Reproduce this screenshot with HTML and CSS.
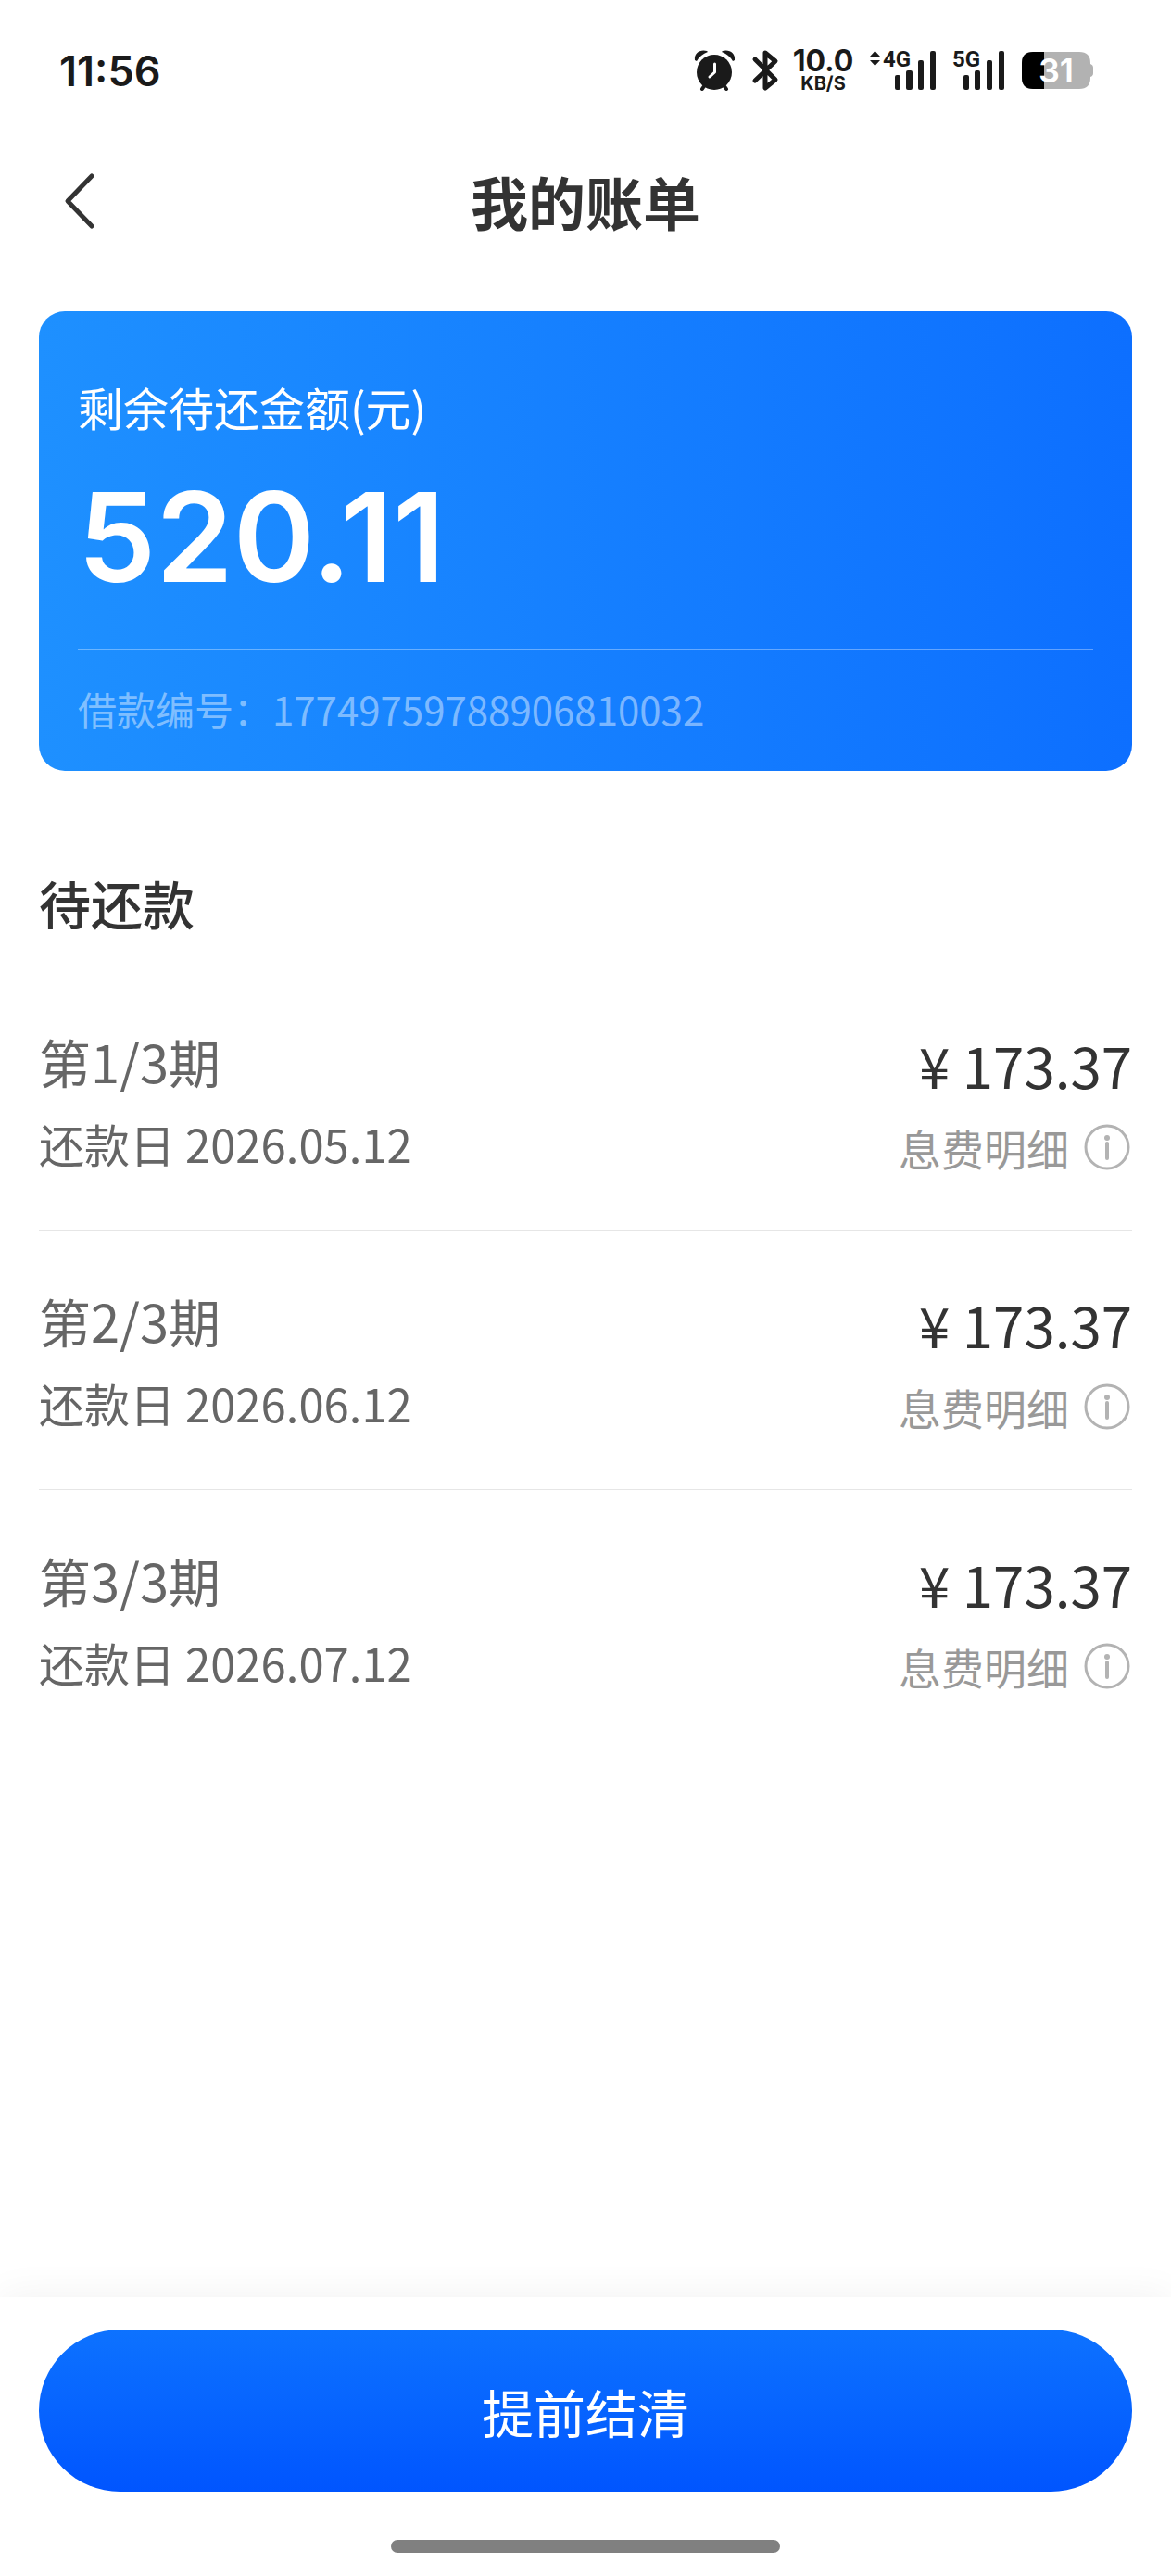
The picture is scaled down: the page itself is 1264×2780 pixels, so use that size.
FILE: index.html
```html
<!DOCTYPE html>
<html lang="zh-CN">
<head>
<meta charset="utf-8">
<meta name="viewport" content="width=device-width, initial-scale=1">
<title>我的账单</title>
<link rel="stylesheet" href="styles.css">
</head>
<body>
<div class="status-bar">
  <time class="clock">11:56</time>
  <div class="indicators">
    <svg class="icon" width="43" height="44" viewBox="0 0 43 44" aria-hidden="true">
      <circle cx="21" cy="24" r="19" fill="#1a1a1a"/>
      <path d="M0 11C-1 3 6-1 13 1L14 2Q6 5 2 12Z" fill="#1a1a1a"/>
      <path d="M43 11C44 3 37-1 30 1L29 2Q37 5 41 12Z" fill="#1a1a1a"/>
      <path d="M10 39L8 42M32 39L34 42" stroke="#1a1a1a" stroke-width="4" stroke-linecap="round"/>
      <path d="M21.500 15V24L16 29" fill="none" stroke="#fff" stroke-width="3" stroke-linecap="round" stroke-linejoin="round"/>
    </svg>
    <svg class="icon" width="26" height="44" viewBox="-1 0 26 44" aria-hidden="true">
      <path d="M2 10L24 32L13 41V3L24 12L2 33" fill="none" stroke="#1a1a1a" stroke-width="5" stroke-linecap="round" stroke-linejoin="round"/>
    </svg>
    <div class="speed"><span class="speed-value">10.0</span><span class="speed-unit">KB/S</span></div>
    <svg class="icon" width="71" height="44" viewBox="0 0 71 44" role="img" aria-label="4G">
      <path d="M5.500 1L11 7H0ZM0 11H11L5.500 17Z" fill="#1a1a1a"/>
      <text class="network" x="14" y="18">4G</text>
      <g fill="#1a1a1a">
        <rect x="27" y="27" width="6" height="16" rx="2"/>
        <rect x="39" y="22" width="7" height="21" rx="2"/>
        <rect x="52" y="11" width="6" height="32" rx="2"/>
        <rect x="65" y="1" width="6" height="42" rx="2"/>
      </g>
    </svg>
    <svg class="icon" width="55" height="44" viewBox="0 0 55 44" role="img" aria-label="5G">
      <text class="network" x="-1" y="18">5G</text>
      <g fill="#1a1a1a">
        <rect x="11" y="27" width="6" height="16" rx="2"/>
        <rect x="23" y="22" width="6" height="21" rx="2"/>
        <rect x="36" y="11" width="6" height="32" rx="2"/>
        <rect x="49" y="1" width="6" height="42" rx="2"/>
      </g>
    </svg>
    <svg class="icon" width="77" height="40" viewBox="0 0 77 40" role="img" aria-label="31%">
      <path d="M12 0H62Q74 0 74 12V13Q77 14 77 17V23Q77 26 74 27V28Q74 40 62 40H12Q0 40 0 28V12Q0 0 12 0Z" fill="#b2b2b2"/>
      <path d="M24 0H12Q0 0 0 12V28Q0 40 12 40H24Z" fill="#000"/>
      <text class="battery-level" x="37" y="33" text-anchor="middle">31</text>
    </svg>
  </div>
</div>

<header class="nav">
  <button class="back" type="button" aria-label="返回">
    <svg class="icon" width="32" height="60" viewBox="0 0 32 60" aria-hidden="true">
      <path d="M29 3L3 30L29 57" fill="none" stroke="#333" stroke-width="5" stroke-linecap="round" stroke-linejoin="round"/>
    </svg>
  </button>
  <h1 class="nav-title">我的账单</h1>
</header>

<main class="content">
  <section class="card">
    <p class="card-label">剩余待还金额(元)</p>
    <p class="card-amount">520.11</p>
    <p class="card-number">借款编号：17749759788906810032</p>
  </section>

  <h2 class="section-title">待还款</h2>
  <ul class="bills">
    <li class="bill">
      <div class="bill-info"><span class="bill-term">第1/3期</span><span class="bill-date">还款日 2026.05.12</span></div>
      <div class="bill-cost">
        <span class="bill-price">¥ 173.37</span>
        <button class="detail" type="button">息费明细
          <svg class="icon" width="50" height="50" viewBox="0 0 50 50" aria-hidden="true"><circle cx="25" cy="25" r="23" fill="none" stroke="#b3b3b3" stroke-width="3"/><circle cx="25" cy="15" r="3" fill="#b3b3b3"/><path d="M25 21V37" stroke="#b3b3b3" stroke-width="4" stroke-linecap="round"/></svg>
        </button>
      </div>
    </li>
    <li class="bill">
      <div class="bill-info"><span class="bill-term">第2/3期</span><span class="bill-date">还款日 2026.06.12</span></div>
      <div class="bill-cost">
        <span class="bill-price">¥ 173.37</span>
        <button class="detail" type="button">息费明细
          <svg class="icon" width="50" height="50" viewBox="0 0 50 50" aria-hidden="true"><circle cx="25" cy="25" r="23" fill="none" stroke="#b3b3b3" stroke-width="3"/><circle cx="25" cy="15" r="3" fill="#b3b3b3"/><path d="M25 21V37" stroke="#b3b3b3" stroke-width="4" stroke-linecap="round"/></svg>
        </button>
      </div>
    </li>
    <li class="bill">
      <div class="bill-info"><span class="bill-term">第3/3期</span><span class="bill-date">还款日 2026.07.12</span></div>
      <div class="bill-cost">
        <span class="bill-price">¥ 173.37</span>
        <button class="detail" type="button">息费明细
          <svg class="icon" width="50" height="50" viewBox="0 0 50 50" aria-hidden="true"><circle cx="25" cy="25" r="23" fill="none" stroke="#b3b3b3" stroke-width="3"/><circle cx="25" cy="15" r="3" fill="#b3b3b3"/><path d="M25 21V37" stroke="#b3b3b3" stroke-width="4" stroke-linecap="round"/></svg>
        </button>
      </div>
    </li>
  </ul>
</main>

<footer class="footer">
  <button class="settle" type="button">提前结清</button>
  <div class="home-bar"></div>
</footer>
</body>
</html>
```
FILE: styles.css
```css
* {
  box-sizing: border-box;
  margin: 0;
  padding: 0;
}

body {
  display: flex;
  flex-direction: column;
  min-height: 100vh;
  background: #fff;
  color: #333;
  font-family: "Noto Sans CJK SC", sans-serif;
}

button {
  border: 0;
  background: none;
  font-family: inherit;
  cursor: pointer;
}

.icon {
  display: block;
  flex: none;
  overflow: visible;
}

/* Status bar */
.status-bar {
  display: flex;
  align-items: center;
  justify-content: space-between;
  height: 152px;
  padding: 0 84px 0 64px;
  color: #1a1a1a;
  font-family: Inter, sans-serif;
}

.clock {
  font-size: 45px;
  font-weight: 600;
}

.indicators {
  display: flex;
  align-items: center;
  gap: 19px;
}

.speed {
  display: flex;
  flex-direction: column;
  align-items: center;
  width: 63px;
  font-weight: 700;
}

.speed-value {
  font-size: 32px;
  line-height: 28px;
}

.speed-unit {
  font-size: 20px;
  line-height: 20px;
}

.network {
  fill: #1a1a1a;
  font-family: Roboto, sans-serif;
  font-size: 24px;
  font-weight: 700;
}

.battery-level {
  fill: #fff;
  font-family: Inter, sans-serif;
  font-size: 36px;
  font-weight: 600;
}

/* Title bar */
.nav {
  display: grid;
  grid-template-columns: 1fr auto 1fr;
  align-items: center;
  height: 129px;
  padding: 0 42px;
}

.back {
  justify-self: start;
  padding: 20px 28px;
}

.nav-title {
  font-size: 62px;
  font-weight: 700;
  line-height: 90px;
}

.content {
  flex: 1;
  padding: 55px 42px 0;
}

/* Balance card */
.card {
  padding: 71px 42px 0;
  border-radius: 28px;
  background: linear-gradient(90deg, #1e90ff, #0d6fff);
  color: #fff;
}

.card-label {
  font-size: 49px;
  line-height: 64px;
}

.card-amount {
  margin: 38px 0 51px;
  font-family: Inter, sans-serif;
  font-size: 134px;
  font-weight: 600;
  line-height: 140px;
}

.card-number {
  padding: 34px 0 37px;
  border-top: 1px solid rgba(255, 255, 255, 0.35);
  color: rgba(255, 255, 255, 0.45);
  font-size: 42px;
  line-height: 60px;
}

/* Instalments */
.section-title {
  margin: 100px 0 32px;
  font-size: 56px;
  font-weight: 500;
  line-height: 84px;
}

.bills {
  list-style: none;
}

.bill {
  display: flex;
  justify-content: space-between;
  padding: 57px 0 53px;
  border-bottom: 1px solid #e6e6e6;
  color: #666;
}

.bill-info,
.bill-cost {
  display: flex;
  flex-direction: column;
}

.bill-info {
  gap: 13px;
}

.bill-cost {
  align-items: flex-end;
  gap: 9px;
}

.bill-term {
  font-size: 56px;
  line-height: 80px;
}

.bill-date {
  font-size: 49px;
  line-height: 72px;
}

.bill-price {
  color: #333;
  font-size: 60px;
  line-height: 88px;
}

.detail {
  display: flex;
  align-items: center;
  gap: 16px;
  padding-right: 2px;
  color: #999;
  font-size: 46px;
  line-height: 72px;
}

/* Bottom action */
.footer {
  position: sticky;
  bottom: 0;
  padding: 35px 42px 25px;
  background: #fff;
  box-shadow: 0 0 42px rgba(0, 0, 0, 0.06);
}

.settle {
  display: block;
  width: 100%;
  height: 175px;
  border-radius: 88px;
  background: linear-gradient(180deg, #0d72ff, #0055ff);
  color: #fff;
  font-size: 56px;
}

.home-bar {
  width: 420px;
  height: 14px;
  margin: 52px auto 0;
  border-radius: 7px;
  background: #808080;
}
```
